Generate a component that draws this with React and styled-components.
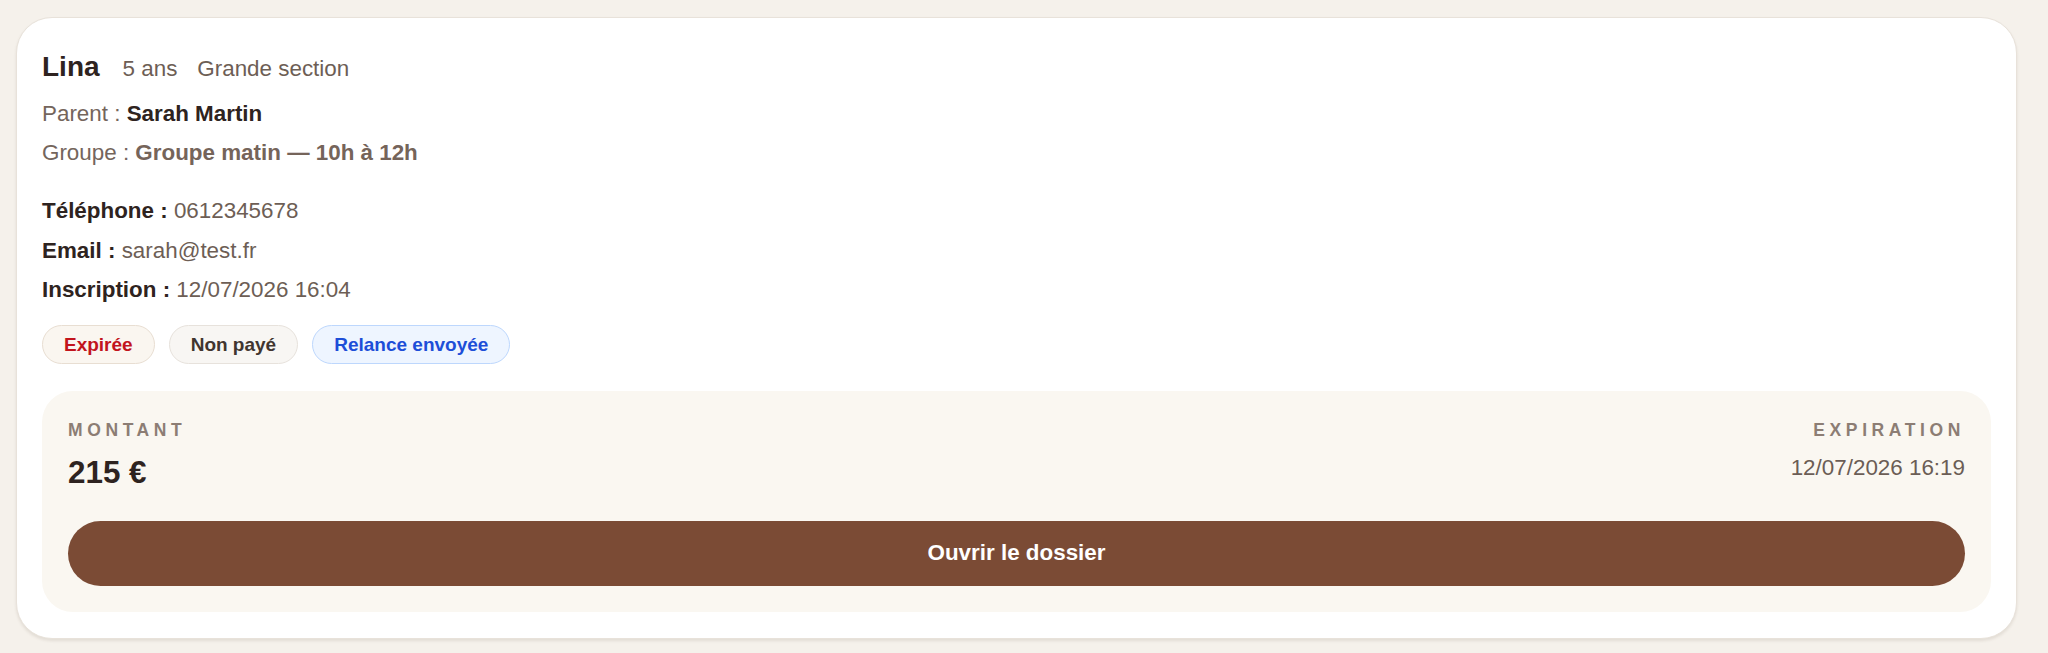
import React from 'react';
import styled, { createGlobalStyle } from 'styled-components';

const GlobalStyle = createGlobalStyle`
    html, body {
        margin: 0;
        padding: 0;
        background: #f5f1eb;
    }
    body {
        font-family: "Liberation Sans", Arial, Helvetica, sans-serif;
        color: #2e2320;
    }
`;

const Page = styled.div`
    padding: 17px 31px 16px 16px;
`;

const Card = styled.article`
    background: #fff;
    border: 1px solid #e8e2da;
    border-radius: 36px;
    box-shadow: 0 2px 3px rgba(70, 50, 30, 0.1);
    padding: 24px 25px 26px;
    font-size: 22.4px;
    line-height: 1.75;
`;

const Header = styled.div`
    display: flex;
    align-items: baseline;
    column-gap: 20px;
    margin-bottom: 3px;
`;

const Name = styled.h2`
    margin: 0 3px 0 0;
    font-size: 28px;
    font-weight: 700;
    color: #2e2320;
`;

const Meta = styled.span`
    color: #6d5e55;
`;

const Block = styled.div`
    & + & {
        margin-top: 19px;
    }
`;

const Line = styled.div`
    color: ${p => (p.$muted ? '#74655c' : '#2e2320')};
`;

const Label = styled.strong`
    font-weight: 700;
    color: #2e2320;
`;

const Value = styled.span`
    color: #6d5e55;
`;

const Strong = styled.strong`
    font-weight: 700;
    color: ${p => p.$tone || '#2e2320'};
`;

const Badges = styled.div`
    display: flex;
    gap: 14px;
    margin-top: 16px;
`;

const badgeTones = {
    danger: { bg: '#faf6f0', border: '#e8ded2', color: '#c2141d' },
    neutral: { bg: '#f8f6f3', border: '#e7e2dc', color: '#41352f' },
    info: { bg: '#eef5ff', border: '#bdd7fd', color: '#1d4ed8' },
};

const Badge = styled.span`
    display: inline-flex;
    align-items: center;
    height: 39px;
    box-sizing: border-box;
    padding: 0 21px;
    border-radius: 999px;
    font-size: 19px;
    font-weight: 700;
    line-height: 1;
    background: ${p => badgeTones[p.$tone].bg};
    border: 1px solid ${p => badgeTones[p.$tone].border};
    color: ${p => badgeTones[p.$tone].color};
`;

const Summary = styled.section`
    margin-top: 27px;
    background: #faf7f1;
    border-radius: 31px;
    padding: 28px 26px 26px;
`;

const SummaryRow = styled.div`
    display: flex;
    justify-content: space-between;
    align-items: flex-start;
`;

const SummaryCol = styled.div`
    display: flex;
    flex-direction: column;
    align-items: ${p => (p.$right ? 'flex-end' : 'flex-start')};
`;

const Caption = styled.span`
    font-size: 17.5px;
    line-height: 22.6px;
    font-weight: 700;
    letter-spacing: 4.6px;
    text-transform: uppercase;
    color: #8c7d74;
`;

const Amount = styled.span`
    margin-top: 12px;
    font-size: 31.4px;
    line-height: 38px;
    font-weight: 700;
    color: #2e2320;
`;

const DateText = styled.span`
    margin-top: 6px;
    font-size: 22.4px;
    line-height: 39.2px;
    color: #6b5d55;
`;

const OpenButton = styled.button`
    display: block;
    width: 100%;
    height: 65px;
    margin-top: 29px;
    border: none;
    border-radius: 999px;
    background: #7b4b35;
    color: #fff;
    font-family: inherit;
    font-size: 22.4px;
    font-weight: 700;
    cursor: pointer;
`;

const registration = {
    child: 'Lina',
    age: '5 ans',
    level: 'Grande section',
    parent: 'Sarah Martin',
    group: 'Groupe matin — 10h à 12h',
    phone: '0612345678',
    email: 'sarah@test.fr',
    createdAt: '12/07/2026 16:04',
    amount: '215 €',
    expiresAt: '12/07/2026 16:19',
};

export default function App() {
    const r = registration;
    return (
        <>
            <GlobalStyle />
            <Page>
                <Card>
                    <Header>
                        <Name>{r.child}</Name>
                        <Meta>{r.age}</Meta>
                        <Meta>{r.level}</Meta>
                    </Header>
                    <Block>
                        <Line $muted>
                            Parent : <Strong>{r.parent}</Strong>
                        </Line>
                        <Line $muted>
                            Groupe : <Strong $tone="#75645a">{r.group}</Strong>
                        </Line>
                    </Block>
                    <Block>
                        <Line>
                            <Label>Téléphone :</Label> <Value>{r.phone}</Value>
                        </Line>
                        <Line>
                            <Label>Email :</Label> <Value>{r.email}</Value>
                        </Line>
                        <Line>
                            <Label>Inscription :</Label> <Value>{r.createdAt}</Value>
                        </Line>
                    </Block>
                    <Badges>
                        <Badge $tone="danger">Expirée</Badge>
                        <Badge $tone="neutral">Non payé</Badge>
                        <Badge $tone="info">Relance envoyée</Badge>
                    </Badges>
                    <Summary>
                        <SummaryRow>
                            <SummaryCol>
                                <Caption>Montant</Caption>
                                <Amount>{r.amount}</Amount>
                            </SummaryCol>
                            <SummaryCol $right>
                                <Caption>Expiration</Caption>
                                <DateText>{r.expiresAt}</DateText>
                            </SummaryCol>
                        </SummaryRow>
                        <OpenButton type="button">Ouvrir le dossier</OpenButton>
                    </Summary>
                </Card>
            </Page>
        </>
    );
}
